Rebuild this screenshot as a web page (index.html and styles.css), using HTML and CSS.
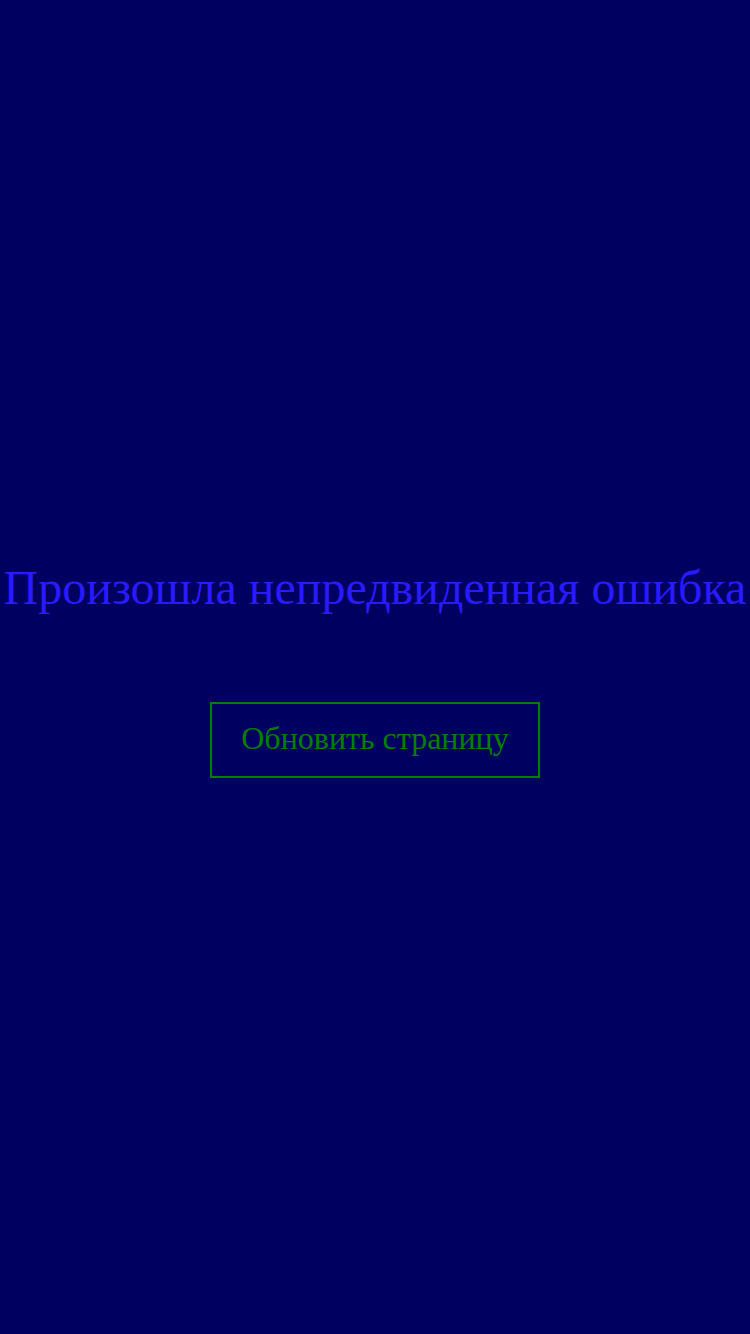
FILE: index.html
```html
<!DOCTYPE html>
<html lang="ru">
<head>
<meta charset="utf-8">
<link rel="stylesheet" href="styles.css">
</head>
<body>
<main class="error">
  <h1 class="error-title">Произошла непредвиденная ошибка</h1>
  <button class="error-btn" type="button">Обновить страницу</button>
</main>
</body>
</html>
```
FILE: styles.css
```css
html, body {
  margin: 0;
  padding: 0;
  height: 100%;
  background: #000060;
}
.error {
  min-height: 100vh;
  display: flex;
  flex-direction: column;
  align-items: center;
  justify-content: center;
  font-family: "Liberation Serif", serif;
}
.error-title {
  margin: 4px 0 0;
  font-weight: normal;
  font-size: 48px;
  line-height: 56px;
  color: #2a1aff;
  white-space: nowrap;
}
.error-btn {
  margin-top: 86px;
  background: transparent;
  border: 2px solid #008000;
  color: #008000;
  font-family: "Liberation Serif", serif;
  font-size: 32px;
  width: 330px;
  height: 76px;
  padding: 0 0 4px;
}
```
